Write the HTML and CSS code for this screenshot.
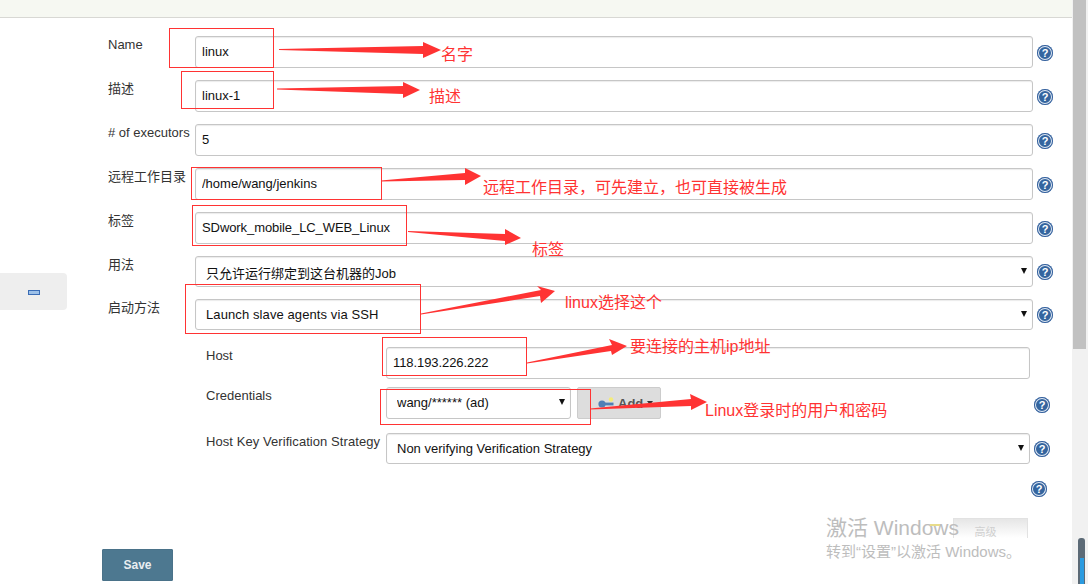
FILE: index.html
```html
<!DOCTYPE html>
<html lang="zh-CN">
<head>
<meta charset="utf-8">
<title>Node configuration</title>
<link rel="stylesheet" href="styles.css">
</head>
<body>
<div class="page">
  <div class="content">
    <div class="topbar"></div>
    <div class="main">
      <aside class="sidebar">
        <div class="side-task"><span class="minus"></span></div>
      </aside>
      <form class="form">
        <div class="row">
          <label class="label">Name</label>
          <input class="input" value="linux">
          <span class="help">?</span>
        </div>
        <div class="row">
          <label class="label">描述</label>
          <input class="input" value="linux-1">
          <span class="help">?</span>
        </div>
        <div class="row">
          <label class="label"># of executors</label>
          <input class="input" value="5">
          <span class="help">?</span>
        </div>
        <div class="row">
          <label class="label">远程工作目录</label>
          <input class="input" value="/home/wang/jenkins">
          <span class="help">?</span>
        </div>
        <div class="row">
          <label class="label">标签</label>
          <input class="input input-tight" value="SDwork_mobile_LC_WEB_Linux">
          <span class="help">?</span>
        </div>
        <div class="row row-select">
          <label class="label">用法</label>
          <div class="select-wrap select-usage"><select class="select"><option>只允许运行绑定到这台机器的Job</option></select></div>
          <span class="help">?</span>
        </div>
        <div class="row row-select row-launch">
          <label class="label">启动方法</label>
          <div class="select-wrap"><select class="select select-wide"><option>Launch slave agents via SSH</option></select></div>
          <span class="help">?</span>
        </div>
        <div class="sub">
          <div class="sub-row sub-host">
            <label class="label">Host</label>
            <input class="input input-tight" value="118.193.226.222">
          </div>
          <div class="sub-row sub-cred">
            <label class="label">Credentials</label>
            <div class="cred">
              <div class="select-wrap cred-select"><select class="select"><option>wang/****** (ad)</option></select></div>
              <button type="button" class="add">
                <svg class="key" viewBox="0 0 16 12" width="16" height="12">
                  <circle cx="13" cy="2.5" r="2.2" fill="#f4ec7a"/>
                  <circle cx="4" cy="7" r="3.6" fill="#4f7fb5"/>
                  <rect x="6" y="5.6" width="9.5" height="2.8" fill="#4f7fb5"/>
                </svg>
                <span>Add</span><span class="caret"></span>
              </button>
            </div>
            <span class="help">?</span>
          </div>
          <div class="sub-row sub-key">
            <label class="label label-wide">Host Key Verification Strategy</label>
            <div class="select-wrap"><select class="select"><option>Non verifying Verification Strategy</option></select></div>
            <span class="help">?</span>
          </div>
          <div class="last-help"><span class="help">?</span></div>
        </div>
        <div class="actions"><button type="button" class="save">Save</button></div>
      </form>
    </div>
  </div>
  <div class="scrollbar"><div class="thumb"></div><div class="gauge"><span class="gauge-fill"></span></div></div>
</div>

<div class="ghost-btn"><span class="ghost-text">高级</span></div>
<div class="watermark">
  <div class="wm-title">激活 Windows</div>
  <div class="wm-sub">转到“设置”以激活 Windows。</div>
</div>

<svg class="marks" width="1088" height="584" aria-hidden="true">
  <path class="wm-spark" d="M930 525h10"/>
  <g class="boxes">
    <rect x="169.5" y="28.5" width="104" height="39"/>
    <rect x="181.5" y="71.5" width="92" height="37"/>
    <rect x="191.5" y="167.5" width="190" height="32"/>
    <rect x="192.5" y="205.5" width="214" height="40"/>
    <rect x="185.5" y="284.5" width="235" height="49"/>
    <rect x="382.5" y="337.5" width="144" height="38"/>
    <rect x="380.5" y="389.5" width="210" height="35"/>
  </g>
  <g class="arrows">
    <polygon points="279,49 423,46 423,42 441,50 423,58 423,54 279,50"/>
    <polygon points="277,88.5 403,86 403,82 420,90 403,98 403,94 277,89.5"/>
    <polygon points="381,180.5 465,173 465,168 481,176 465,185 465,180 381,181.5"/>
    <polygon points="408,231 505,234 505,229 521,238 505,245 505,241 408,232"/>
    <polygon points="421,313.5 541,290 537,286 555,291 541,303 540,296 421,314.5"/>
    <polygon points="527,362.5 612,345 609,339 627,346 612,355 611,351 527,363.5"/>
    <polygon points="590,408.5 691,399 690,394 707,402 691,410 691,406 590,409.5"/>
  </g>
</svg>
<div class="note note-1">名字</div>
<div class="note note-2">描述</div>
<div class="note note-3">远程工作目录，可先建立，也可直接被生成</div>
<div class="note note-4">标签</div>
<div class="note note-5">linux选择这个</div>
<div class="note note-6">要连接的主机ip地址</div>
<div class="note note-7">Linux登录时的用户和密码</div>
</body>
</html>
```

FILE: styles.css
```css
* { box-sizing: border-box; }
html, body { margin: 0; padding: 0; height: 584px; overflow: hidden; background: #fff; }
body {
  position: relative;
  font-family: "Liberation Sans", "Noto Sans CJK SC", sans-serif;
  font-size: 13px;
  color: #333;
}

.page { display: flex; height: 584px; }
.content { flex: 1; min-width: 0; display: flex; flex-direction: column; }
.topbar { height: 18px; background: #f6f8f2; border-bottom: 1px solid #d8d8d4; flex: none; }
.main { display: flex; flex: 1; }

.sidebar { width: 67px; flex: none; padding-top: 255px; }
.side-task {
  height: 37px;
  background: #eee;
  border-radius: 0 4px 4px 0;
  display: flex;
  align-items: center;
  justify-content: center;
  padding-top: 1px;
}
.minus { width: 12px; height: 5px; background: #9cc0e8; border: 1px solid #3a6cb5; }

.form { margin-left: 41px; padding-top: 18px; }

.row {
  display: grid;
  grid-template-columns: 87px 838px auto;
  height: 32px;
  margin-bottom: 12px;
}
.row-select { height: 31px; }
.row-launch { margin-bottom: 17px; }

.label { line-height: 16px; padding-top: 1px; color: #333; white-space: nowrap; }
.label-wide { letter-spacing: .07px; }

.input, .select {
  width: 100%;
  height: 100%;
  border: 1px solid #c6c6c6;
  border-radius: 3px;
  box-shadow: inset 0 1px 1px rgba(0, 0, 0, .08);
  background: #fff;
  font: inherit;
  color: #111;
  outline: none;
  margin: 0;
}
.input { padding: 0 6px 2px; }
.input-tight { letter-spacing: -.08px; }
.select { padding: 0 20px 0 10px; appearance: none; -webkit-appearance: none; }
.select-wide { letter-spacing: .1px; }
.select-usage .select { padding-top: 3px; }
.cred-select .select { padding-bottom: 2px; }

.select-wrap { position: relative; height: 100%; }
.select-wrap::after {
  content: "";
  position: absolute;
  right: 6px;
  top: 12px;
  border-left: 3px solid transparent;
  border-right: 3px solid transparent;
  border-top: 6px solid #111;
}

.help {
  display: block;
  width: 16px;
  height: 16px;
  margin: 2px 0 0 4px;
  align-self: center;
  border-radius: 50%;
  background: #34659f;
  box-shadow: inset 0 0 0 1px #2f5c9a, inset 0 0 0 2px #dfe8f3;
  color: #fff;
  font: bold 11px/16px "Liberation Sans", sans-serif;
  text-align: center;
}
.row-select .help { margin-top: 1px; }

.sub { margin-left: 98px; }
.sub-row { display: grid; grid-template-columns: 180px 644px auto; height: 31px; }
.sub-host { height: 32px; margin-bottom: 8px; }
.sub-cred { margin-bottom: 15px; }
.sub-cred .help { margin-top: 4px; }
.sub-key { margin-bottom: 17px; }
.sub-key .help { margin-top: 1px; }

.cred { display: flex; gap: 6px; height: 100%; }
.cred-select { width: 185px; flex: none; }
.add {
  width: 84px;
  height: 32px;
  flex: none;
  background: #ddd;
  border: 1px solid #ccc;
  border-radius: 2px;
  display: flex;
  align-items: center;
  gap: 4px;
  padding: 0 0 0 20px;
  font: bold 13px "Liberation Sans", sans-serif;
  color: #555;
}
.key { flex: none; }
.caret { border-left: 3px solid transparent; border-right: 3px solid transparent; border-top: 4px solid #333; }

.last-help { height: 16px; margin-left: 821px; }
.last-help .help { margin: 0 0 0 4px; }

.actions { margin: 52px 0 0 -6px; }
.save {
  display: block;
  width: 71px;
  height: 32px;
  background: #4d7890;
  border: 1px solid #4a7289;
  border-radius: 1px;
  color: #e9eef1;
  font: bold 12px "Liberation Sans", sans-serif;
  padding: 0;
}

.scrollbar { width: 16px; flex: none; background: #f1f1f1; padding-left: 1px; position: relative; }
.thumb { width: 13px; height: 349px; background: #c1c1c1; }
.gauge {
  position: absolute;
  left: 6px;
  top: 538px;
  width: 7px;
  height: 46px;
  background: #5c6a76;
  border-radius: 3px 3px 0 0;
  display: flex;
  align-items: flex-end;
  justify-content: center;
}
.gauge-fill { width: 4px; height: 26px; background: #2b9be0; }

.watermark { position: absolute; left: 826px; top: 514px; color: #bdbdbd; white-space: nowrap; }
.wm-title { font-size: 21px; line-height: 28px; }
.wm-sub { font-size: 15px; line-height: 20px; margin-top: 0; }
.wm-spark { stroke: #e8dc8a; stroke-width: 2; fill: none; }
.ghost-btn {
  position: absolute;
  left: 953px;
  top: 518px;
  width: 75px;
  height: 20px;
  padding: 7px 10px 0 0;
  text-align: center;
  border: 1px solid #e2e2e2;
  border-bottom: 0;
  background: linear-gradient(#e6e6e6, #fff);
}
.ghost-text { display: block; font-size: 11px; line-height: 12px; color: #cfcfcf; }

.marks { position: absolute; left: 0; top: 0; pointer-events: none; }
.boxes rect { fill: none; stroke: #f33; stroke-width: 1; shape-rendering: crispEdges; }
.arrows polygon { fill: #f33; }

.note { position: absolute; color: #f33; font-size: 16px; line-height: 20px; white-space: nowrap; }
.note-1 { left: 441px; top: 45px; }
.note-2 { left: 429px; top: 87px; }
.note-3 { left: 483px; top: 178px; }
.note-4 { left: 532px; top: 240px; }
.note-5 { left: 565px; top: 293px; }
.note-6 { left: 630px; top: 337px; }
.note-7 { left: 705px; top: 401px; }
```
